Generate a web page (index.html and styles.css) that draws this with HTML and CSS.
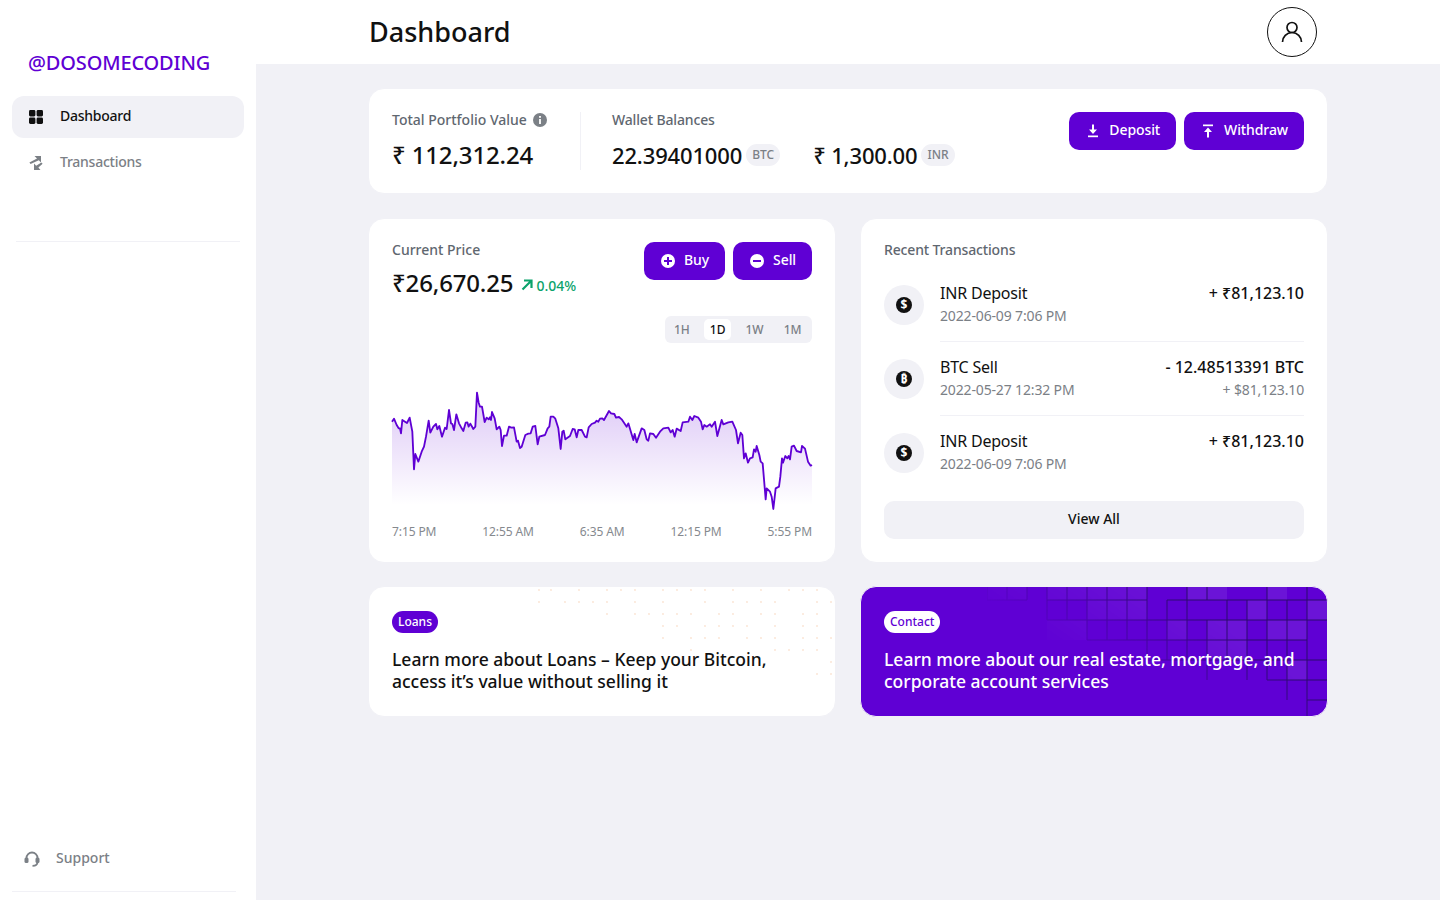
FILE: index.html
```html
<!DOCTYPE html>
<html>
<head>
	<title>Dashboard</title>
	<link rel="stylesheet" href="styles.css">
</head>
<body>
	<aside id="sidebar">
		<div class="logo">@DOSOMECODING</div>
		<nav class="nav">
			<a class="nav-item active">
				<svg class="nav-icon" viewBox="0 0 14 14"><rect width="6.4" height="6.4" rx="1.4"/><rect x="7.6" width="6.4" height="6.4" rx="1.4"/><rect y="7.6" width="6.4" height="6.4" rx="1.4"/><rect x="7.6" y="7.6" width="6.4" height="6.4" rx="1.4"/></svg>
				<span>Dashboard</span>
			</a>
			<a class="nav-item">
				<svg class="nav-icon" viewBox="0 0 14 14"><path d="M5.500 0H12V6.500L9.800 4.300 1.600 8 0.400 6.500 8 2.500z"/><path d="M5 14V7.500L7.200 9.700 12.400 6.400 13.600 7.800 9.400 11.500 11.500 14z"/></svg>
				<span>Transactions</span>
			</a>
		</nav>
		<hr class="side-line">
		<div class="spacer"></div>
		<a class="support">
			<svg class="support-icon" viewBox="0 0 16 16"><path class="band" d="M2.500 8V7a5.500 5.500 0 0 1 11 0v1M13.500 11c0 2.200-1.800 3.800-5 3.800"/><rect x="0.500" y="6.500" width="4" height="5.500" rx="1.500"/><rect x="11.500" y="6.500" width="4" height="5.500" rx="1.500"/></svg>
			<span>Support</span>
		</a>
		<hr class="side-line bottom">
	</aside>

	<div id="page">
		<header class="topbar">
			<div class="topbar-inner">
				<h1>Dashboard</h1>
				<div class="avatar">
					<svg viewBox="0 0 24 24"><circle cx="12" cy="7.5" r="5"/><path d="M2.500 22c0-5.200 4.200-9.500 9.500-9.500s9.500 4.300 9.500 9.500"/></svg>
				</div>
			</div>
		</header>

		<main class="content">
			<section class="card summary">
				<div class="total">
					<div class="label">Total Portfolio Value
						<svg class="info" viewBox="0 0 14 14"><circle cx="7" cy="7" r="7"/><rect x="6.100" y="6" width="1.800" height="5" fill="#fff"/><rect x="6.100" y="3" width="1.800" height="1.800" fill="#fff"/></svg>
					</div>
					<div class="big">₹ 112,312.24</div>
				</div>
				<div class="wallets">
					<div class="label">Wallet Balances</div>
					<div class="wallet-row">
						<div class="big">22.39401000</div><span class="unit">BTC</span>
						<div class="big second">₹ 1,300.00</div><span class="unit">INR</span>
					</div>
				</div>
				<div class="actions">
					<a class="btn">
						<svg viewBox="0 0 16 16"><path d="M7 1.500h2v5h3l-4 4.500-4-4.500h3z"/><rect x="3" y="12.500" width="10" height="1.700"/></svg>
						Deposit
					</a>
					<a class="btn">
						<svg viewBox="0 0 16 16"><rect x="3" y="1.500" width="10" height="1.700"/><path d="M8 4.500l4 4.500H9v5.500H7V9H4z"/></svg>
						Withdraw
					</a>
				</div>
			</section>

			<section class="card price">
				<div class="price-head">
					<div>
						<div class="label">Current Price</div>
						<div class="price-line">
							<span class="big">₹26,670.25</span>
							<svg class="up" viewBox="0 0 12 12"><path d="M3 1.500h7.500V9M10.500 1.500L1.500 10.500"/></svg>
							<span class="change">0.04%</span>
						</div>
					</div>
					<div class="actions">
						<a class="btn">
							<svg viewBox="0 0 16 16"><circle cx="8" cy="8" r="7"/><path class="cut" d="M7 4h2v3h3v2H9v3H7V9H4V7h3z"/></svg>
							Buy
						</a>
						<a class="btn">
							<svg viewBox="0 0 16 16"><circle cx="8" cy="8" r="7"/><rect class="cut" x="4" y="7" width="8" height="2"/></svg>
							Sell
						</a>
					</div>
				</div>
				<div class="tabs">
					<span class="tab">1H</span>
					<span class="tab on">1D</span>
					<span class="tab">1W</span>
					<span class="tab">1M</span>
				</div>
				<svg class="chart" viewBox="0 0 1260 390">
					<defs>
						<linearGradient id="fade" gradientUnits="userSpaceOnUse" x1="0" y1="38" x2="0" y2="375">
							<stop offset="0" stop-color="#6000d6" stop-opacity="0.22"/>
							<stop offset="1" stop-color="#6000d6" stop-opacity="0"/>
						</linearGradient>
					</defs>
					<path class="area" d="M0 125 6 116 14 135 20 145 24 145 27 160 31 120 39 125 45 129 53 113 61 155 66 268 70 222 79 245 89 215 96 200 102 170 110 122 115 158 124 140 132 132 136 148 142 138 150 170 159 143 164 147 171 90 177 130 181 132 186 150 193 103 201 130 209 145 214 153 221 128 226 127 230 140 235 131 244 147 250 140 255 38 260 68 264 80 270 80 278 126 284 113 290 118 294 112 297 120 300 96 308 115 314 148 322 140 326 150 330 198 336 167 344 167 351 140 358 143 366 142 374 185 378 182 384 204 389 200 400 165 409 161 416 160 422 140 430 138 437 193 442 170 459 165 467 145 472 140 476 110 484 110 490 116 499 145 506 207 511 155 515 152 520 178 534 168 542 147 548 148 554 172 559 150 569 150 579 170 584 172 590 142 599 132 609 128 614 122 619 125 624 116 631 115 636 120 651 93 657 100 667 102 672 113 681 111 689 118 704 140 709 130 724 180 728 162 734 187 749 145 757 150 764 178 769 182 774 160 784 162 792 173 804 155 814 145 829 143 836 157 842 150 848 170 854 146 866 153 872 127 889 125 894 110 901 120 907 108 919 113 927 125 932 148 937 135 944 140 954 133 959 140 969 125 976 168 989 120 994 133 1009 127 1021 125 1032 150 1038 190 1046 158 1051 165 1056 235 1061 220 1068 248 1074 235 1082 232 1086 208 1091 215 1094 198 1102 225 1106 245 1112 250 1121 358 1124 325 1134 335 1139 350 1144 387 1151 325 1161 320 1165 290 1170 235 1173 248 1180 228 1186 235 1190 228 1194 238 1199 200 1206 197 1214 213 1227 217 1230 198 1239 206 1248 245 1256 257 1260 255V375H0z"/>
					<path class="line" d="M0 125 6 116 14 135 20 145 24 145 27 160 31 120 39 125 45 129 53 113 61 155 66 268 70 222 79 245 89 215 96 200 102 170 110 122 115 158 124 140 132 132 136 148 142 138 150 170 159 143 164 147 171 90 177 130 181 132 186 150 193 103 201 130 209 145 214 153 221 128 226 127 230 140 235 131 244 147 250 140 255 38 260 68 264 80 270 80 278 126 284 113 290 118 294 112 297 120 300 96 308 115 314 148 322 140 326 150 330 198 336 167 344 167 351 140 358 143 366 142 374 185 378 182 384 204 389 200 400 165 409 161 416 160 422 140 430 138 437 193 442 170 459 165 467 145 472 140 476 110 484 110 490 116 499 145 506 207 511 155 515 152 520 178 534 168 542 147 548 148 554 172 559 150 569 150 579 170 584 172 590 142 599 132 609 128 614 122 619 125 624 116 631 115 636 120 651 93 657 100 667 102 672 113 681 111 689 118 704 140 709 130 724 180 728 162 734 187 749 145 757 150 764 178 769 182 774 160 784 162 792 173 804 155 814 145 829 143 836 157 842 150 848 170 854 146 866 153 872 127 889 125 894 110 901 120 907 108 919 113 927 125 932 148 937 135 944 140 954 133 959 140 969 125 976 168 989 120 994 133 1009 127 1021 125 1032 150 1038 190 1046 158 1051 165 1056 235 1061 220 1068 248 1074 235 1082 232 1086 208 1091 215 1094 198 1102 225 1106 245 1112 250 1121 358 1124 325 1134 335 1139 350 1144 387 1151 325 1161 320 1165 290 1170 235 1173 248 1180 228 1186 235 1190 228 1194 238 1199 200 1206 197 1214 213 1227 217 1230 198 1239 206 1248 245 1256 257 1260 255"/>
				</svg>
				<div class="axis">
					<span>7:15 PM</span>
					<span>12:55 AM</span>
					<span>6:35 AM</span>
					<span>12:15 PM</span>
					<span>5:55 PM</span>
				</div>
			</section>

			<section class="card recent">
				<div class="label">Recent Transactions</div>
				<div class="tx">
					<div class="tx-icon"><span class="coin">$</span></div>
					<div class="tx-body">
						<div>
							<div class="tx-title">INR Deposit</div>
							<div class="tx-sub">2022-06-09 7:06 PM</div>
						</div>
						<div class="tx-right">
							<div class="tx-amount">+ ₹81,123.10</div>
						</div>
					</div>
				</div>
				<div class="tx">
					<div class="tx-icon"><span class="coin">₿</span></div>
					<div class="tx-body">
						<div>
							<div class="tx-title">BTC Sell</div>
							<div class="tx-sub">2022-05-27 12:32 PM</div>
						</div>
						<div class="tx-right">
							<div class="tx-amount">- 12.48513391 BTC</div>
							<div class="tx-sub">+ $81,123.10</div>
						</div>
					</div>
				</div>
				<div class="tx">
					<div class="tx-icon"><span class="coin">$</span></div>
					<div class="tx-body">
						<div>
							<div class="tx-title">INR Deposit</div>
							<div class="tx-sub">2022-06-09 7:06 PM</div>
						</div>
						<div class="tx-right">
							<div class="tx-amount">+ ₹81,123.10</div>
						</div>
					</div>
				</div>
				<a class="view-all">View All</a>
			</section>

			<section class="card promo">
				<svg class="dots" viewBox="0 0 320 129"><path d="M23 4h0M35 4h0M63 4h0M91 4h0M105 4h0M119 4h0M147 4h0M161 4h0M175 4h0M189 4h0M217 4h0M245 4h0M273 4h0M287 4h0M301 4h0M23 16h0M49 16h0M63 16h0M77 16h0M91 16h0M119 16h0M147 16h0M189 16h0M217 16h0M231 16h0M245 16h0M259 16h0M301 16h0M315 16h0M91 28h0M119 28h0M133 28h0M147 28h0M161 28h0M175 28h0M203 28h0M217 28h0M245 28h0M259 28h0M287 28h0M301 28h0M147 40h0M161 40h0M189 40h0M203 40h0M217 40h0M231 40h0M259 40h0M287 40h0M301 40h0M147 52h0M175 52h0M189 52h0M203 52h0M231 52h0M245 52h0M259 52h0M287 52h0M301 52h0M315 52h0M175 64h0M259 64h0M273 64h0M287 64h0M301 64h0M315 76h0M301 88h0M315 88h0"/></svg>
				<span class="pill">Loans</span>
				<p class="promo-text">Learn more about Loans – Keep your Bitcoin, access it’s value without selling it</p>
			</section>

			<section class="card promo dark">
				<svg class="squares" viewBox="0 0 340 129">
					<path class="lit" d="M0 0h40v13H0zM60 0h100v13H60zM200 0h40v13h-40zM280 0h20v13h-20zM100 13h60v20h-60zM260 13h20v20h-20zM320 13h20v20h-20zM60 33h40v20H60zM180 33h20v20h-20zM220 33h40v20h-40zM280 33h40v20h-40zM220 53h40v20h-40zM300 73h20v20h-20z"/>
					<path class="grid" d="M0 13h40M60 13h100M180 13h160M60 33h280M100 53h220M160 73h180M280 93h60M320 113h20M0 0v13M20 0v13M40 0v13M60 0v33M80 0v33M100 0v53M120 0v53M140 0v53M160 0v73M180 13v60M200 0v73M220 0v13M220 33v60M240 13v60M260 13v80M280 0v93M300 13v100M320 0v129"/>
				</svg>
				<span class="pill">Contact</span>
				<p class="promo-text">Learn more about our real estate, mortgage, and corporate account services</p>
			</section>
		</main>
	</div>
</body>
</html>
```

FILE: styles.css
```css
html, body {
	margin: 0;
	height: 100%;
}

body {
	display: flex;
	background: #f1f1f6;
	color: #111;
	font-family: 'Noto Sans', sans-serif;
	font-size: 14px;
	overflow: hidden;
}

a {
	cursor: pointer;
}

/* sidebar */
#sidebar {
	width: 256px;
	flex: none;
	height: 900px;
	box-sizing: border-box;
	padding: 0 12px;
	background: #fff;
	display: flex;
	flex-direction: column;
}

.logo {
	height: 96px;
	padding: 47px 0 0 16px;
	box-sizing: border-box;
	font-size: 20px;
	line-height: 32px;
	font-weight: 500;
	letter-spacing: -0.15px;
	color: #5f00d4;
}

.nav {
	display: flex;
	flex-direction: column;
	gap: 4px;
}

.nav-item {
	height: 42px;
	box-sizing: border-box;
	padding: 0 0 3px 17px;
	display: flex;
	align-items: center;
	gap: 17px;
	border-radius: 12px;
	font-weight: 500;
	letter-spacing: -0.25px;
	color: #7b8086;
}
.nav-item.active {
	background: #f1f1f6;
	color: #111;
}

.nav-icon {
	width: 14px;
	height: 14px;
	margin-top: 3px;
	fill: currentColor;
}

.side-line {
	margin: 57px 4px 0;
	border: 0;
	border-top: 1px solid #f1f1f6;
}
.side-line.bottom {
	margin: 0 8px 8px 0;
}

.spacer {
	flex: 1;
}

.support {
	height: 42px;
	display: flex;
	align-items: flex-start;
	gap: 16px;
	padding-left: 12px;
	line-height: 17px;
	font-weight: 500;
	color: #7b8086;
}

.support-icon {
	width: 16px;
	height: 16px;
	margin-top: 2px;
	fill: currentColor;
}
.support-icon .band {
	fill: none;
	stroke: currentColor;
	stroke-width: 1.800;
}

/* top bar */
#page {
	flex: 1;
}

.topbar {
	height: 64px;
	background: #fff;
}

.topbar-inner {
	width: 960px;
	height: 64px;
	margin: 0 auto;
	box-sizing: border-box;
	padding: 0 11px 0 1px;
	display: flex;
	align-items: center;
	justify-content: space-between;
}

.topbar h1 {
	margin: -2px 0 0;
	font-size: 27px;
	font-weight: 500;
}

.avatar {
	width: 50px;
	height: 50px;
	box-sizing: border-box;
	border: 1px solid #111;
	border-radius: 50%;
	display: flex;
	align-items: center;
	justify-content: center;
}
.avatar svg {
	width: 24px;
	height: 24px;
	fill: none;
	stroke: #111;
	stroke-width: 1.7;
}

/* cards */
.content {
	width: 960px;
	margin: 24px auto 0;
	display: grid;
	grid-template-columns: 1fr 1fr;
	gap: 24px;
}

.card {
	position: relative;
	overflow: hidden;
	box-sizing: border-box;
	padding: 23px;
	background: #fff;
	border: 1px solid #f1f1f6;
	border-radius: 16px;
}

.label {
	height: 16px;
	line-height: 16px;
	font-weight: 500;
	color: #5f6770;
}

.big {
	font-size: 24px;
	line-height: 30px;
	font-weight: 500;
	letter-spacing: -0.15px;
}

.summary {
	grid-column: 1 / 3;
	height: 106px;
	display: flex;
}

.total {
	width: 188px;
	border-right: 1px solid #f1f1f6;
}
.total .big {
	margin-top: 12px;
}

.info {
	width: 14px;
	height: 14px;
	margin-left: 2px;
	vertical-align: -2px;
	fill: #7b8086;
}

.wallets {
	padding-left: 31px;
}
.wallets .label {
	letter-spacing: -0.15px;
}

.wallet-row {
	margin-top: 12px;
	display: flex;
	align-items: center;
}
.wallet-row .big {
	font-size: 22px;
}
.wallet-row .second {
	margin-left: 33px;
}

.unit {
	height: 22px;
	margin-left: 4px;
	padding: 0 6px;
	border-radius: 11px;
	background: #f1f1f6;
	color: #7b8086;
	font-size: 12px;
	line-height: 22px;
	font-weight: 500;
}

.actions {
	margin-left: auto;
	display: flex;
	gap: 8px;
}

.btn {
	height: 38px;
	box-sizing: border-box;
	padding: 0 16px 3px;
	display: flex;
	align-items: center;
	gap: 8px;
	border-radius: 10px;
	background: #5f00d4;
	color: #fff;
	font-weight: 500;
	letter-spacing: -0.1px;
}
.btn svg {
	width: 16px;
	height: 16px;
	margin-top: 2px;
	fill: #fff;
}
.btn svg .cut {
	fill: #5f00d4;
}

/* price chart */
.price {
	height: 345px;
}

.price-head {
	height: 58px;
	display: flex;
}

.price-line {
	margin-top: 10px;
	display: flex;
	align-items: center;
}

.up {
	width: 12px;
	height: 12px;
	margin: 4px 3px 0 8px;
	fill: none;
	stroke: #0ca36c;
	stroke-width: 2.2;
}

.change {
	margin-top: 5px;
	font-weight: 500;
	color: #0ca36c;
}

.tabs {
	width: 147px;
	height: 27px;
	margin: 16px 0 0 auto;
	box-sizing: border-box;
	padding: 0 3px;
	display: flex;
	align-items: center;
	gap: 8px;
	border-radius: 6px;
	background: #f1f1f6;
}

.tab {
	height: 21px;
	padding: 0 6px;
	border-radius: 5px;
	font-size: 12px;
	line-height: 21px;
	font-weight: 500;
	color: #7b8086;
}
.tab.on {
	background: #fff;
	color: #111;
}

.chart {
	display: block;
	width: 420px;
	height: 130px;
	margin-top: 37px;
	overflow: visible;
}
.chart .area {
	fill: url(#fade);
}
.chart .line {
	fill: none;
	stroke: #5f00d4;
	stroke-width: 5.5;
	stroke-linejoin: round;
}

.axis {
	margin-top: 15px;
	display: flex;
	justify-content: space-between;
	font-size: 12px;
	line-height: 14px;
	letter-spacing: -0.1px;
	color: #85898e;
}

/* recent transactions */
.recent {
	height: 345px;
}
.recent .label {
	margin-bottom: 10px;
	letter-spacing: -0.15px;
}

.tx {
	height: 74px;
	display: flex;
	gap: 16px;
}

.tx-icon {
	width: 40px;
	height: 40px;
	flex: none;
	margin-top: 17px;
	border-radius: 50%;
	background: #f1f1f6;
	display: flex;
	align-items: center;
	justify-content: center;
}

.coin {
	width: 16px;
	height: 16px;
	border-radius: 50%;
	background: #111;
	color: #fff;
	text-align: center;
	font-size: 12px;
	line-height: 16px;
	font-weight: 700;
}

.tx-body {
	flex: 1;
	box-sizing: border-box;
	padding-top: 14px;
	display: flex;
	justify-content: space-between;
	border-bottom: 1px solid #f1f1f6;
}
.tx:nth-of-type(4) .tx-body {
	border-bottom: 0;
}

.tx-title {
	font-size: 16px;
	line-height: 22px;
	letter-spacing: -0.2px;
}

.tx-sub {
	margin-top: 2px;
	line-height: 20px;
	letter-spacing: -0.15px;
	color: #7b8086;
}

.tx-right {
	text-align: right;
}

.tx-amount {
	font-size: 16px;
	line-height: 22px;
	font-weight: 500;
}

.view-all {
	display: block;
	height: 38px;
	margin-top: 11px;
	border-radius: 10px;
	background: #f1f1f6;
	text-align: center;
	line-height: 36px;
	font-weight: 500;
}

/* promo cards */
.promo {
	height: 131px;
	margin-top: -1px;
	padding-top: 24px;
}

.pill {
	position: relative;
	display: inline-block;
	height: 22px;
	padding: 0 6px;
	border-radius: 11px;
	background: #5f00d4;
	color: #fff;
	font-size: 12px;
	line-height: 22px;
	font-weight: 500;
	vertical-align: top;
}

.promo-text {
	position: relative;
	margin: 15px 0 0;
	font-size: 17.5px;
	line-height: 22px;
	font-weight: 500;
}

.dots {
	position: absolute;
	top: -1px;
	right: -1px;
	width: 320px;
	height: 129px;
	fill: none;
	stroke: #fbe2d0;
	stroke-width: 2.2;
	stroke-linecap: round;
	opacity: 0.8;
}

.dark {
	background: #5f00d4;
	color: #fff;
}
.dark .pill {
	background: #fff;
	color: #5f00d4;
}

.squares {
	position: absolute;
	top: 0;
	right: 0;
	width: 340px;
	height: 129px;
	-webkit-mask-image: linear-gradient(215deg, #000 30%, transparent 72%);
	mask-image: linear-gradient(215deg, #000 30%, transparent 72%);
}
.squares .lit {
	fill: rgba(255, 255, 255, 0.08);
}
.squares .grid {
	fill: none;
	stroke: #2c0a6e;
	stroke-width: 1;
}
```
